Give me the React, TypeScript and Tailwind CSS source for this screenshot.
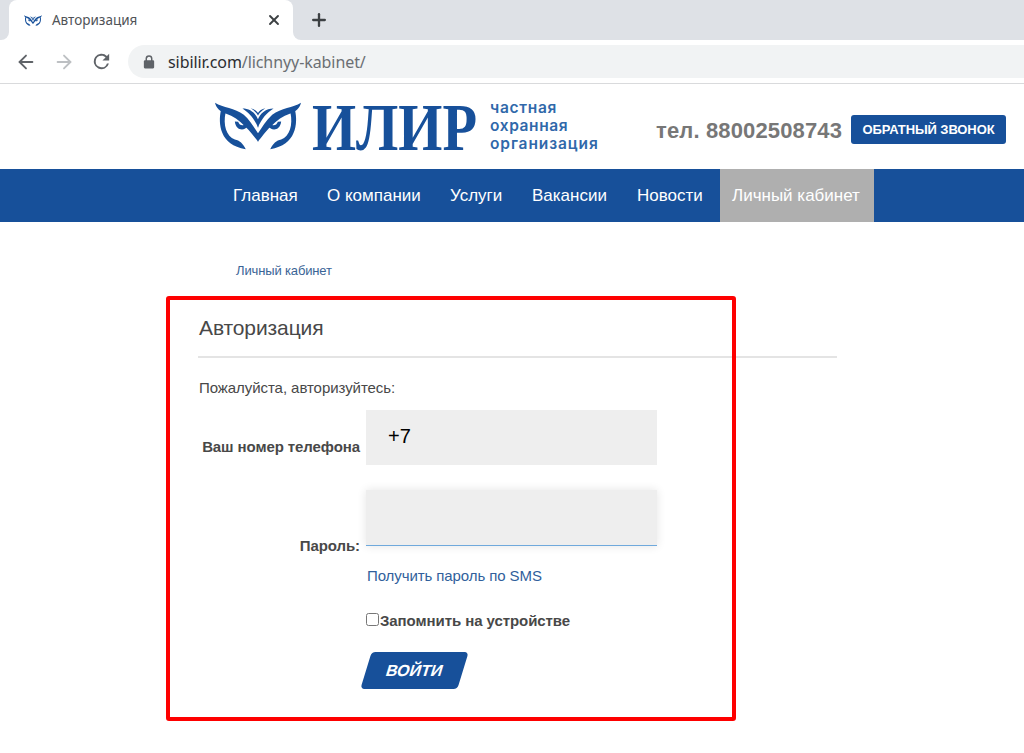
import { ArrowLeft, ArrowRight, Plus, X } from 'lucide-react';

const nav = [
  { label: 'Главная', cls: 'w-[94px]' },
  { label: 'О компании', cls: 'w-[123px]' },
  { label: 'Услуги', cls: 'w-[82px]' },
  { label: 'Вакансии', cls: 'w-[105px]' },
  { label: 'Новости', cls: 'w-[97px]' },
];

function OwlHalf() {
  return (
    <g>
      <path d="M30 40C54 55 90 54 117 75C136 91 148 112 161 129V152C151 142 140 125 122 109C103 91 84 78 64 72C45 66 34 55 30 40Z" />
      <path d="M48 62C39 100 44 162 123 174C115 158 104 148 90 146C64 136 54 104 62 68Z" />
      <path d="M90 94C93 121 120 123 129 106L122 100C117 108 104 107 100 95Z" />
      <path d="M113 57C136 57 153 70 161 90V112C147 84 134 70 113 57Z" />
      <path d="M138 56C148 58 156 63 161 71V77C155 69 148 62 138 56Z" />
    </g>
  );
}

function Owl({ className }: { className: string }) {
  return (
    <svg viewBox="30 38 260 138" preserveAspectRatio="none" fill="#17509a" className={className}>
      <OwlHalf />
      <g transform="matrix(-1 0 0 1 320 0)">
        <OwlHalf />
      </g>
    </svg>
  );
}

function Browser() {
  return (
    <div className="font-['Noto_Sans','Open_Sans',sans-serif]">
      {/* Tabs */}
      <div className="flex h-10 bg-[#dee1e6]">
        <div className="flex w-[9px] bg-white">
          <div className="w-full rounded-br-lg bg-[#dee1e6]" />
        </div>
        <div className="flex w-[284px] items-center rounded-t-lg bg-white pl-[15px]">
          <Owl className="h-[11px] w-[18px] shrink-0" />
          <span className="ml-[10px] flex-1 whitespace-nowrap text-[13.5px] text-[#505357]">Авторизация</span>
          <X size={16} strokeWidth={2.8} className="mr-[11px] text-[#3c4043]" />
        </div>
        <div className="flex w-[9px] bg-white">
          <div className="w-full rounded-bl-lg bg-[#dee1e6]" />
        </div>
        <Plus size={20} strokeWidth={2.8} className="ml-[7px] mt-[10px] text-[#3c4043]" />
      </div>

      {/* Toolbar */}
      <div className="flex h-11 items-center border-b border-[#d9dadc] bg-white pl-[15px]">
        <ArrowLeft size={22} strokeWidth={2} className="text-[#5f6368]" />
        <ArrowRight size={22} strokeWidth={2} className="ml-4 text-[#bdc0c3]" />
        <svg viewBox="0 0 24 24" className="ml-[15px] h-[23px] w-[23px] fill-[#5f6368]">
          <path d="M17.65 6.35A8 8 0 1 0 19.73 14h-2.08A6 6 0 1 1 12 6c1.66 0 3.14.69 4.22 1.78L13 11h7V4z" />
        </svg>
        <div className="ml-[15px] flex h-[33px] flex-1 items-center rounded-l-full bg-[#f1f3f4] pl-[15px]">
          <svg viewBox="0 0 14 16" className="h-[14px] w-[12px]">
            <rect x="1" y="6" width="12" height="9.5" rx="1.3" fill="#5f6368" />
            <path d="M3.8 7V4.3a3.2 3.2 0 0 1 6.4 0V7" fill="none" stroke="#5f6368" strokeWidth="1.7" />
          </svg>
          <span className="ml-[13px] whitespace-nowrap text-base tracking-[-0.08px] text-[#6b6f73]">
            <span className="text-[#2b2d30]">sibilir.com</span>/lichnyy-kabinet/
          </span>
        </div>
      </div>
    </div>
  );
}

function Header() {
  return (
    <header className="flex h-[85px] items-start pl-[215px]">
      <Owl className="mt-[18px] h-[48px] w-[86px]" />
      <svg viewBox="0 0 168 84" className="ml-[10px] h-[84px] w-[168px] overflow-visible">
        <g transform="translate(1 65.5) scale(0.84 1)">
          <text textLength="196.5" lengthAdjust="spacingAndGlyphs" fill="#17509a" className="font-['Liberation_Serif',serif] text-[67px] font-bold">ИЛИР</text>
        </g>
      </svg>
      <div className="ml-[11px] mt-[15px] flex w-[112px] flex-col whitespace-nowrap font-['Inter',sans-serif] text-[15.5px] font-semibold leading-[18px] text-[#3068aa]">
        <span className="tracking-[0.7px]">частная</span>
        <span className="tracking-[0.6px]">охранная</span>
        <span className="tracking-[0.9px]">организация</span>
      </div>
      <div className="ml-[54px] mt-[31px] w-[195px] whitespace-nowrap text-[22px] font-bold leading-8 tracking-[0.14px] text-[#777]">тел. 88002508743</div>
      <button className="mt-[31px] h-[29px] w-[155px] shrink-0 whitespace-nowrap rounded-[3px] bg-[#17509a] text-[13px] font-bold tracking-[-0.1px] text-white">ОБРАТНЫЙ ЗВОНОК</button>
    </header>
  );
}

export default function App() {
  return (
    <div className="relative h-[753px] w-[1024px] overflow-hidden bg-white font-['Liberation_Sans',Arial,sans-serif]">
      <Browser />
      <Header />

      <nav className="flex h-[53px] items-center bg-[#17509a] pl-[233px] pt-px text-[17px] text-white">
        {nav.map((item) => (
          <a key={item.label} className={`shrink-0 whitespace-nowrap ${item.cls}`}>{item.label}</a>
        ))}
        <a className="-ml-[14px] -mt-px flex h-[53px] w-[154px] items-center whitespace-nowrap bg-[#afafaf] pl-3 pt-px">Личный кабинет</a>
      </nav>

      <main className="w-[837px] pl-[198px] pt-[39px] text-[#484848]">
        <a className="ml-[38px] block text-[13px] leading-5 tracking-[-0.14px] text-[#3a6496]">Личный кабинет</a>
        <h1 className="mt-[31px] border-b-2 border-[#e4e4e4] pb-[12px] pl-px text-[21px] leading-8 tracking-[-0.1px]">Авторизация</h1>
        <p className="mt-[20px] pl-px text-[15px] leading-5 tracking-[-0.06px]">Пожалуйста, авторизуйтесь:</p>

        <div className="mt-[12px] flex">
          <label className="w-[168px] whitespace-nowrap pr-[6px] pt-[27px] text-right text-[15px] font-bold leading-5 tracking-[-0.09px]">Ваш номер телефона</label>
          <div className="h-[55px] w-[291px] bg-[#eee] pl-[22px] pt-[10px] text-xl leading-8 text-black">+7</div>
        </div>
        <div className="mt-[25px] flex">
          <label className="w-[168px] whitespace-nowrap pr-[6px] pt-[46px] text-right text-[15px] font-bold leading-5 tracking-[-0.09px]">Пароль:</label>
          <div className="h-[56px] w-[291px] border-b border-[#6fa9dc] bg-[#eee] shadow-[0_0_9px_rgba(0,0,0,0.11)]" />
        </div>

        <div className="pl-[168px] pt-[10px]">
          <a className="block pl-px text-[15px] leading-5 tracking-[-0.09px] text-[#315f9c]">Получить пароль по SMS</a>
          <label className="mt-[25px] flex items-center text-[15px] font-bold leading-5 tracking-[-0.07px]">
            <span className="mb-[3px] mr-px h-[13px] w-[13px] rounded-[2.5px] border border-[#777] bg-white" />
            <span className="whitespace-nowrap">Запомнить на устройстве</span>
          </label>
          <button className="mt-[21px] h-[37px] w-[97px] -skew-x-[17deg] rounded-[4px] bg-[#17509a] text-white">
            <span className="block text-base font-bold">ВОЙТИ</span>
          </button>
        </div>
      </main>

      {/* Highlight frame */}
      <div className="absolute left-[166px] top-[296px] h-[425px] w-[570px] rounded-[3px] border-4 border-[#fe0000]" />
    </div>
  );
}
